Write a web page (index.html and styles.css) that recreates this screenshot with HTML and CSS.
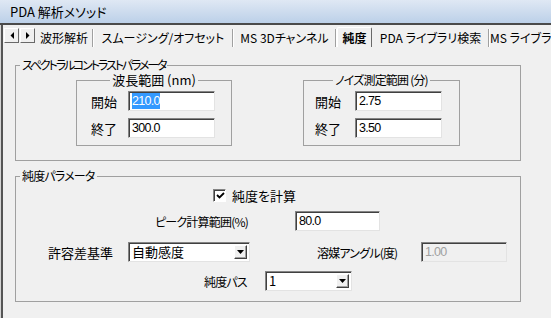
FILE: index.html
```html
<!DOCTYPE html>
<html lang="ja">
<head>
<meta charset="utf-8">
<title>PDA 解析メソッド</title>
<link rel="stylesheet" href="styles.css">
</head>
<body>
<div class="titlebar">PDA 解析メソッド</div>
<div class="frame">
  <div class="frame-in">
    <div class="tabrow">
      <div class="arrows">
        <span class="abtn"><svg width="4" height="7" viewBox="0 0 4 7"><path d="M4 0V7L0.5 3.5Z" fill="#000"/></svg></span>
        <span class="abtn"><svg width="4" height="7" viewBox="0 0 4 7"><path d="M0 0V7L3.5 3.5Z" fill="#000"/></svg></span>
      </div>
      <div class="tab w1">波形解析</div>
      <div class="tab w2">スムージング/オフセット</div>
      <div class="tab w3">MS 3Dチャンネル</div>
      <div class="tab sel w4">純度</div>
      <div class="tab w5">PDA ライブラリ検索</div>
      <div class="tab w6">MS ライブラリ検索</div>
    </div>
    <div class="panel">
      <fieldset class="grp g1">
        <legend class="lg-spec">スペクトラルコントラストパラメータ</legend>
        <div class="subs">
          <fieldset class="sub s1">
            <legend>波長範囲 (nm)</legend>
            <div class="frow"><span class="lbl">開始</span><span class="inp"><span class="hl">210.0</span></span></div>
            <div class="frow"><span class="lbl">終了</span><span class="inp">300.0</span></div>
          </fieldset>
          <fieldset class="sub s2">
            <legend class="tight">ノイズ測定範囲 (分)</legend>
            <div class="frow"><span class="lbl">開始</span><span class="inp">2.75</span></div>
            <div class="frow"><span class="lbl">終了</span><span class="inp">3.50</span></div>
          </fieldset>
        </div>
      </fieldset>
      <fieldset class="grp g2">
        <legend class="tight">純度パラメータ</legend>
        <div class="row ra">
          <span class="chk"><svg width="9" height="9" viewBox="0 0 9 9"><path d="M1 4L3.5 6.5L8 2" fill="none" stroke="#000" stroke-width="1.8"/></svg></span>
          <span class="chklbl">純度を計算</span>
        </div>
        <div class="row rb">
          <span class="lbl2 lb-peak tight">ピーク計算範囲(%)</span>
          <span class="inp w85">80.0</span>
        </div>
        <div class="row rc">
          <span class="lbl2 lb-tol">許容差基準</span>
          <span class="dd w122"><span class="ddtext">自動感度</span><span class="ddbtn"><svg width="7" height="4" viewBox="0 0 7 4"><path d="M0 0H7L3.5 4Z" fill="#000"/></svg></span></span>
          <span class="lbl2 lb-angle tight">溶媒アングル(度)</span>
          <span class="inp dis w86">1.00</span>
        </div>
        <div class="row rd">
          <span class="lbl2 lb-pass tight">純度パス</span>
          <span class="dd w87"><span class="ddtext">1</span><span class="ddbtn"><svg width="7" height="4" viewBox="0 0 7 4"><path d="M0 0H7L3.5 4Z" fill="#000"/></svg></span></span>
        </div>
      </fieldset>
    </div>
  </div>
</div>
</body>
</html>
```

FILE: styles.css
```css
* { box-sizing: border-box; }
html, body { margin: 0; padding: 0; }
body {
  width: 551px;
  height: 318px;
  overflow: hidden;
  background: #f0f0f0;
  color: #000;
  font-family: "Noto Sans CJK JP", "Liberation Sans", sans-serif;
  font-size: 13px;
  font-feature-settings: "palt";
}

.titlebar {
  height: 25px;
  background: linear-gradient(#dfe8f4, #bcd0e8);
  border-bottom: 2px solid #4a4a4a;
  padding-left: 10px;
  line-height: 23px;
  font-size: 13px;
  white-space: nowrap;
}

.frame {
  height: 293px;
  border-left: 1px solid #d4d4d4;
}
.frame-in {
  height: 100%;
  border-left: 2px solid #555;
}

.tabrow {
  height: 22px;
  display: flex;
  align-items: flex-end;
  padding-left: 1px;
  overflow: hidden;
  white-space: nowrap;
}
.arrows {
  align-self: flex-start;
  margin-top: 3px;
  display: flex;
  gap: 1px;
  margin-right: 1px;
}
.abtn {
  width: 15px;
  height: 15px;
  display: flex;
  align-items: center;
  justify-content: center;
  background: #f0f0f0;
  border: 1px solid;
  border-color: #fff #696969 #696969 #fff;
}
.tab {
  flex: none;
  height: 18px;
  line-height: 17px;
  font-size: 12px;
  text-align: center;
  border-right: 1px solid #a0a0a0;
  box-shadow: 1px 0 0 #fff;
  margin-right: 1px;
}
.tab.sel {
  height: 20px;
  line-height: 19px;
  font-weight: bold;
  border-left: 1px solid #fff;
  border-top: 1px solid #fff;
  border-right: 1px solid #696969;
  border-radius: 2px 2px 0 0;
  box-shadow: none;
}
.w1 { width: 57px; }
.w2 { width: 139px; }
.w3 { width: 102px; }
.w4 { width: 35px; }
.w5 { width: 116px; }
.w6 { width: 90px; }

.panel {
  padding: 11px 0 0 12px;
}

.tight {
  font-size: 12px;
  letter-spacing: -0.8px;
}

fieldset { margin: 0; min-width: 0; }
.grp {
  width: 506px;
  border: 1px solid #a0a0a0;
  padding: 0;
}
.grp > legend {
  margin-left: 4px;
  padding: 0 2px;
  line-height: 14px;
  height: 14px;
}
.grp > legend.lg-spec {
  font-size: 12px;
  letter-spacing: -2.1px;
}
.g1 { padding: 1px 0 14px 0; }
.subs { display: flex; gap: 71px; margin-left: 60px; }
.sub {
  width: 156px;
  border: 1px solid #a0a0a0;
  padding: 4px 0 7px 0;
}
.sub > legend {
  margin: 0 auto;
  padding: 0 2px;
  line-height: 14px;
  height: 14px;
}
.s1 .frow { margin-left: 14px; }
.s2 { width: 157px; }
.s2 .frow { margin-left: 11px; }
.frow {
  display: flex;
  align-items: center;
  height: 20px;
}
.frow + .frow { margin-top: 7px; }
.lbl { width: 37px; }
.s2 .lbl { width: 40px; }

.inp {
  display: block;
  width: 87px;
  height: 20px;
  background: #fff;
  border: 1px solid;
  border-color: #848484 #e3e3e3 #e3e3e3 #848484;
  box-shadow: inset 1px 1px 0 #404040;
  padding-left: 3px;
  font-family: "Liberation Sans", "Arial", sans-serif;
  font-size: 12.5px;
  letter-spacing: -0.7px;
  line-height: 18px;
}
.hl {
  background: #3399ff;
  color: #fff;
  padding: 1px 0.5px 1px 0;
}
.inp.dis {
  background: #f0f0f0;
  color: #a0a0a0;
}
.w85 { width: 85px; }
.w86 { width: 86px; }

.g2 {
  margin-top: 8px;
  padding: 0 0 10px 0;
}
.row {
  display: flex;
  align-items: center;
  height: 20px;
}
.ra { margin-top: 2px; padding-left: 197px; }
.rb { margin-top: 6px; padding-left: 139px; }
.rc { margin-top: 11px; padding-left: 32px; }
.rd { margin-top: 9px; padding-left: 188px; }

.chk {
  width: 13px;
  height: 13px;
  background: #fff;
  border: 1px solid;
  border-color: #848484 #fff #fff #848484;
  box-shadow: inset 1px 1px 0 #404040;
  display: flex;
  align-items: center;
  justify-content: center;
  padding: 1px 0 0 1px;
}
.chklbl { margin-left: 6px; }

.lb-peak { width: 140px; }
.lb-tol { width: 80px; }
.lb-angle { width: 104px; margin-left: 67px; }
.lb-pass { width: 61px; }

.dd {
  display: flex;
  align-items: center;
  height: 20px;
  background: #fff;
  border: 1px solid;
  border-color: #848484 #e3e3e3 #e3e3e3 #848484;
  box-shadow: inset 1px 1px 0 #404040;
  padding: 2px 2px 2px 3px;
}
.w122 { width: 122px; }
.w87 { width: 87px; }
.ddtext { flex: 1; line-height: 16px; }
.ddbtn {
  width: 13px;
  height: 14px;
  display: flex;
  align-items: center;
  justify-content: center;
  background: #f0f0f0;
  border: 1px solid;
  border-color: #fff #404040 #404040 #fff;
  box-shadow: inset -1px -1px 0 #a0a0a0;
}
```
